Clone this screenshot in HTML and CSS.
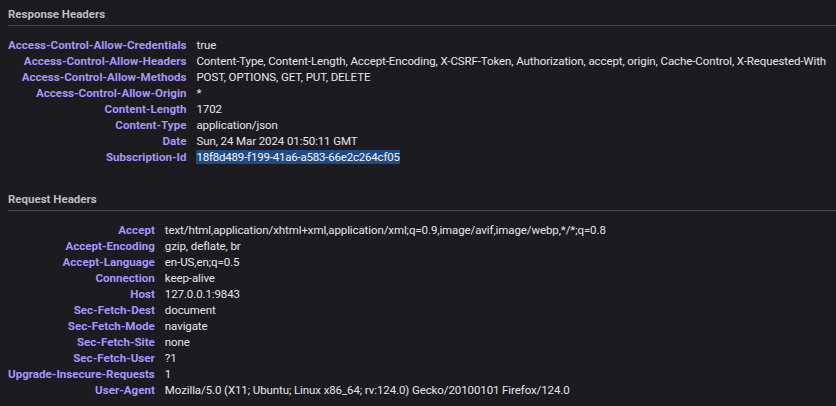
FILE: index.html
```html
<!DOCTYPE html>
<html lang="en">
<head>
<meta charset="utf-8">
<title>Headers</title>
<link rel="stylesheet" href="styles.css">
</head>
<body>
<section class="section">
  <h2 class="section-title">Response Headers</h2>
  <div class="headers">
    <div class="name">Access-Control-Allow-Credentials</div><div class="value">true</div>
    <div class="name">Access-Control-Allow-Headers</div><div class="value">Content-Type, Content-Length, Accept-Encoding, X-CSRF-Token, Authorization, accept, origin, Cache-Control, X-Requested-With</div>
    <div class="name">Access-Control-Allow-Methods</div><div class="value">POST, OPTIONS, GET, PUT, DELETE</div>
    <div class="name">Access-Control-Allow-Origin</div><div class="value">*</div>
    <div class="name">Content-Length</div><div class="value">1702</div>
    <div class="name">Content-Type</div><div class="value">application/json</div>
    <div class="name">Date</div><div class="value">Sun, 24 Mar 2024 01:50:11 GMT</div>
    <div class="name">Subscription-Id</div><div class="value"><span class="selected">18f8d489-f199-41a6-a583-66e2c264cf05</span></div>
  </div>
</section>
<section class="section">
  <h2 class="section-title">Request Headers</h2>
  <div class="headers">
    <div class="name">Accept</div><div class="value">text/html,application/xhtml+xml,application/xml;q=0.9,image/avif,image/webp,*/*;q=0.8</div>
    <div class="name">Accept-Encoding</div><div class="value">gzip, deflate, br</div>
    <div class="name">Accept-Language</div><div class="value">en-US,en;q=0.5</div>
    <div class="name">Connection</div><div class="value">keep-alive</div>
    <div class="name">Host</div><div class="value">127.0.0.1:9843</div>
    <div class="name">Sec-Fetch-Dest</div><div class="value">document</div>
    <div class="name">Sec-Fetch-Mode</div><div class="value">navigate</div>
    <div class="name">Sec-Fetch-Site</div><div class="value">none</div>
    <div class="name">Sec-Fetch-User</div><div class="value">?1</div>
    <div class="name">Upgrade-Insecure-Requests</div><div class="value">1</div>
    <div class="name">User-Agent</div><div class="value">Mozilla/5.0 (X11; Ubuntu; Linux x86_64; rv:124.0) Gecko/20100101 Firefox/124.0</div>
  </div>
</section>
</body>
</html>
```
FILE: styles.css
```css
html, body {
  margin: 0;
  padding: 0;
  background: #1c1b20;
  height: 100%;
}
body {
  font-family: Roboto, "Noto Sans", sans-serif;
  font-size: 11.5px;
  line-height: 16px;
  color: #e6e6ea;
  overflow: hidden;
}
.section {
  display: flex;
  flex-direction: column;
  padding-top: 6px;
  padding-bottom: 20px;
}
.section-title {
  margin: 0 0 0 8px;
  padding: 0 0 3px 0;
  font-size: 11.5px;
  font-weight: 700;
  line-height: 16px;
  color: #bcbcc2;
  border-bottom: 1px solid #48484d;
}
.headers {
  display: grid;
  grid-template-columns: max-content 1fr;
  column-gap: 10px;
  padding: 11px 0 0 8px;
}
.name {
  text-align: right;
  font-weight: 700;
  font-size: 11.6px;
  color: #a994fb;
  white-space: nowrap;
}
.value {
  white-space: nowrap;
  letter-spacing: -0.1px;
}
.selected {
  background: #1f4b85;
  color: #f4f4f8;
  letter-spacing: -0.2px;
}
```
